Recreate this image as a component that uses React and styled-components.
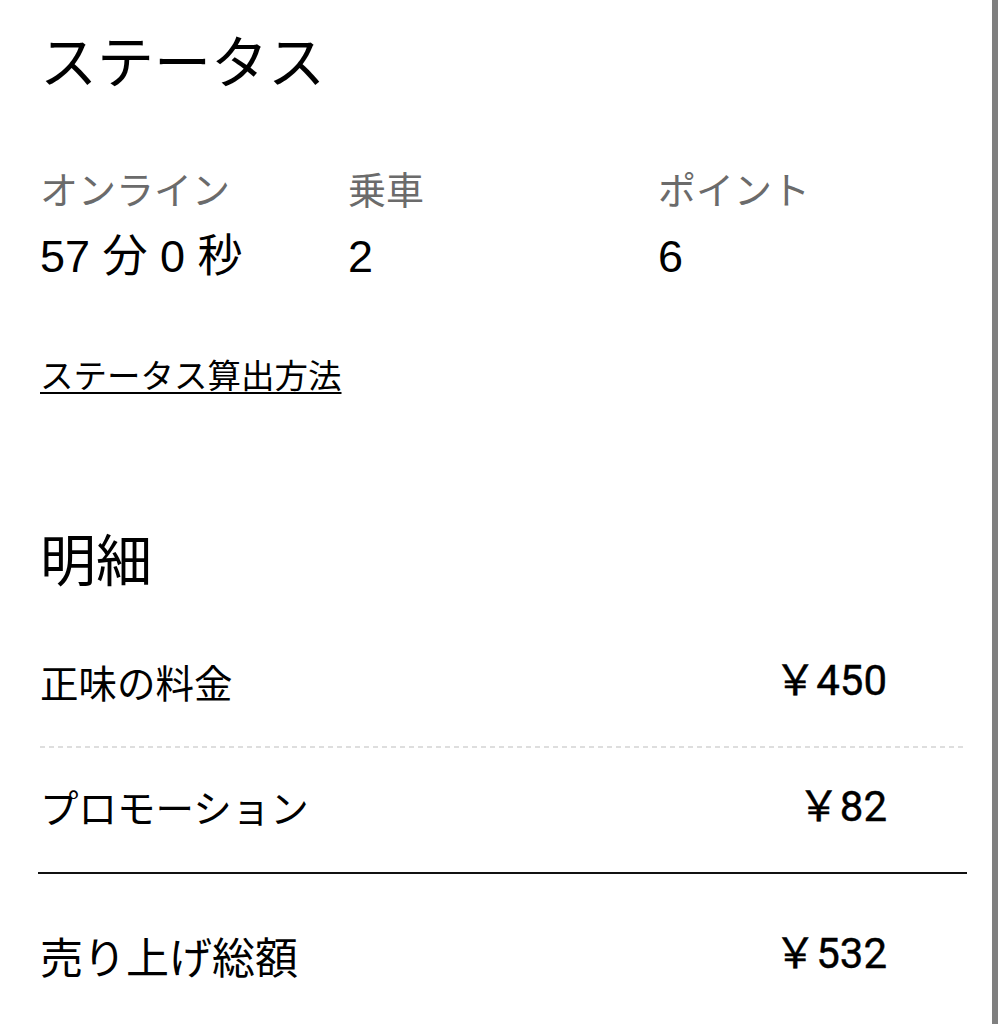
import React from 'react';
import styled, { createGlobalStyle } from 'styled-components';

const GlobalStyle = createGlobalStyle`
  html, body {
    margin: 0;
    padding: 0;
    background: #ffffff;
  }
  body {
    font-family: "Noto Sans CJK JP", "Noto Sans", sans-serif;
    color: #000;
  }
`;

const Page = styled.div`
  display: flex;
  width: 1005px;
  height: 1024px;
  overflow: hidden;
`;

const Content = styled.main`
  flex: 1;
  padding: 0 25px 0 40px;
`;

const EdgeBar = styled.div`
  width: 6px;
  margin-right: 7px;
  background: #7f7f7f;
`;

const Title = styled.h1`
  margin: 0;
  font-size: 57px;
  font-weight: 400;
  line-height: 116px;
  height: 116px;
`;

const Stats = styled.div`
  display: grid;
  grid-template-columns: 308px 310px 1fr;
  margin-top: 44px;
`;

const Stat = styled.div`
  display: flex;
  flex-direction: column;
`;

const StatLabel = styled.span`
  font-size: 38px;
  line-height: 56px;
  color: #6b6b6b;
`;

const StatValue = styled.span`
  font-family: "Liberation Sans", "Noto Sans CJK JP", sans-serif;
  font-size: 45px;
  line-height: 82px;
  color: #000;
`;

const Link = styled.a`
  display: inline-block;
  margin-top: 52px;
  font-size: 33.5px;
  line-height: 48px;
  color: #000;
  text-decoration: underline;
  text-decoration-thickness: 2px;
  text-underline-offset: 4px;
`;

const SectionTitle = styled.h2`
  margin: 119px 0 26px;
  font-size: 56px;
  font-weight: 400;
  line-height: 80px;
`;

const Row = styled.div`
  display: flex;
  align-items: center;
  justify-content: space-between;
  height: ${p => p.$h}px;
  padding-bottom: 10px;
  box-sizing: border-box;
`;

const RowLabel = styled.span`
  font-size: ${p => p.$size || 38.5}px;
  margin-top: ${p => (p.$size ? 6 : 2)}px;
`;

const Amount = styled.span`
  margin-right: 80px;
  margin-bottom: 6px;
  font-family: Roboto, "Noto Sans CJK JP", sans-serif;
  font-size: 42px;
  font-weight: 400;
  -webkit-text-stroke: 0.4px #000;
`;

const DashedRule = styled.div`
  height: 2px;
  background: repeating-linear-gradient(to right, #dedede 0 5px, transparent 5px 9px);
`;

const SolidRule = styled.div`
  height: 2px;
  margin-left: -2px;
  background: #111;
`;

const stats = [
  { label: 'オンライン', value: '57 分 0 秒' },
  { label: '乗車', value: '2' },
  { label: 'ポイント', value: '6' },
];

export default function App() {
  return (
    <>
      <GlobalStyle />
      <Page>
        <Content>
          <Title>ステータス</Title>
          <Stats>
            {stats.map(s => (
              <Stat key={s.label}>
                <StatLabel>{s.label}</StatLabel>
                <StatValue>{s.value}</StatValue>
              </Stat>
            ))}
          </Stats>
          <Link href="#">ステータス算出方法</Link>
          <SectionTitle>明細</SectionTitle>
          <Row $h={123}>
            <RowLabel>正味の料金</RowLabel>
            <Amount>￥450</Amount>
          </Row>
          <DashedRule />
          <Row $h={124}>
            <RowLabel>プロモーション</RowLabel>
            <Amount>￥82</Amount>
          </Row>
          <SolidRule />
          <Row $h={166}>
            <RowLabel $size={43}>売り上げ総額</RowLabel>
            <Amount>￥532</Amount>
          </Row>
        </Content>
        <EdgeBar />
      </Page>
    </>
  );
}
